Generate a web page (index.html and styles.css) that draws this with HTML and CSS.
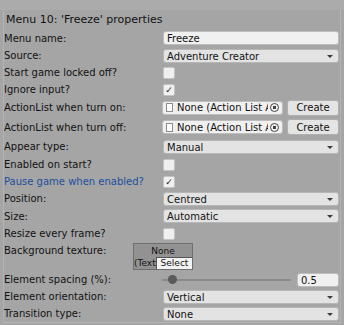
FILE: index.html
```html
<!DOCTYPE html>
<html>
  <head>
    <meta charset="utf-8" />
    <link rel="stylesheet" href="styles.css">
  </head>
  <body>
    <div class="topbar"></div>
    <div class="panel">
      <div class="title">Menu 10: 'Freeze' properties</div>

      <div class="row r18">
        <span class="label">Menu name:</span>
        <div class="field text">Freeze</div>
      </div>
      <div class="row">
        <span class="label">Source:</span>
        <div class="field dropdown">Adventure Creator<span class="arrow"></span></div>
      </div>
      <div class="row">
        <span class="label">Start game locked off?</span>
        <div class="checkbox"></div>
      </div>
      <div class="row">
        <span class="label">Ignore input?</span>
        <div class="checkbox checked">✓</div>
      </div>

      <div class="row r19">
        <span class="label">ActionList when turn on:</span>
        <div class="object-row">
          <div class="field object">
            <span class="doc-icon"></span>
            <span class="object-name">None (Action List Asset)</span>
            <span class="picker"></span>
          </div>
          <button class="btn">Create</button>
        </div>
      </div>
      <div class="row r20">
        <span class="label">ActionList when turn off:</span>
        <div class="object-row">
          <div class="field object">
            <span class="doc-icon"></span>
            <span class="object-name">None (Action List Asset)</span>
            <span class="picker"></span>
          </div>
          <button class="btn">Create</button>
        </div>
      </div>

      <div class="row r19">
        <span class="label">Appear type:</span>
        <div class="field dropdown">Manual<span class="arrow"></span></div>
      </div>
      <div class="row">
        <span class="label">Enabled on start?</span>
        <div class="checkbox"></div>
      </div>
      <div class="row">
        <span class="label blue">Pause game when enabled?</span>
        <div class="checkbox checked">✓</div>
      </div>
      <div class="row">
        <span class="label">Position:</span>
        <div class="field dropdown">Centred<span class="arrow"></span></div>
      </div>
      <div class="row r18">
        <span class="label">Size:</span>
        <div class="field dropdown">Automatic<span class="arrow"></span></div>
      </div>
      <div class="row">
        <span class="label">Resize every frame?</span>
        <div class="checkbox"></div>
      </div>

      <div class="texture-row">
        <span class="label">Background texture:</span>
        <div class="texture-box">
          <span class="texture-none">None</span>
          <span class="texture-type">(Texture)</span>
          <span class="select-btn">Select</span>
        </div>
      </div>

      <div class="row">
        <span class="label">Element spacing (%):</span>
        <div class="slider-row">
          <div class="slider">
            <span class="track"></span>
            <span class="thumb"></span>
          </div>
          <div class="field number">0.5</div>
        </div>
      </div>
      <div class="row">
        <span class="label">Element orientation:</span>
        <div class="field dropdown">Vertical<span class="arrow"></span></div>
      </div>
      <div class="row">
        <span class="label">Transition type:</span>
        <div class="field dropdown">None<span class="arrow"></span></div>
      </div>
    </div>
  </body>
</html>
```

FILE: styles.css
```css
body {
  width: 344px;
  height: 325px;
  margin: 0;
  overflow: hidden;
  background: #a5a5a5;
  font-family: "DejaVu Sans", Verdana, sans-serif;
  font-size: 10px;
  color: #121212;
}

.topbar {
  height: 10px;
  background: #ababab;
}

.panel {
  height: 312px;
  margin: 0 3px;
  padding-right: 1px;
  border-left: 1px solid #b3b3b3;
  border-right: 1px solid #b3b3b3;
  border-bottom: 1px solid #b3b3b3;
}

.title {
  height: 19px;
  line-height: 19px;
  padding-left: 2px;
  font-size: 11px;
}

.row {
  display: grid;
  grid-template-columns: 159px minmax(0, 1fr);
  align-items: center;
  height: 17px;
}

.r18 {
  height: 18px;
}

.r19 {
  height: 19px;
}

.r20 {
  height: 20px;
}

.label {
  white-space: nowrap;
}

.label.blue {
  color: #1c4f9e;
}

.field {
  position: relative;
  height: 14px;
  line-height: 13px;
  padding-left: 3px;
  border: 1px solid #bdbdbd;
  border-radius: 3px;
  background: #f0f0f0;
  box-sizing: border-box;
  white-space: nowrap;
  overflow: hidden;
}

.dropdown {
  background: #e3e3e3;
  border-color: #b6b6b6;
}

.arrow {
  position: absolute;
  right: 5px;
  top: 5px;
  border-left: 3px solid transparent;
  border-right: 3px solid transparent;
  border-top: 3px solid #3a3a3a;
}

.checkbox {
  width: 12px;
  height: 12px;
  border: 1px solid #c4c4c4;
  border-radius: 2px;
  background: #f0f0f0;
  box-sizing: border-box;
  font-size: 9px;
  line-height: 11px;
  text-align: center;
  color: #1a1a1a;
}

.object-row {
  display: flex;
  gap: 4px;
  align-items: center;
  min-width: 0;
}

.object {
  flex: 1;
  min-width: 0;
  display: flex;
  align-items: center;
  padding-left: 3px;
  margin-left: -1px;
}

.doc-icon {
  flex: none;
  width: 5px;
  height: 7px;
  border: 1px solid #8c8c8c;
  background: #ffffff;
  margin-right: 4px;
}

.object-name {
  flex: 1;
  min-width: 0;
  overflow: hidden;
  white-space: nowrap;
}

.picker {
  flex: none;
  width: 7px;
  height: 7px;
  margin: 0 3px 0 2px;
  border: 1px solid #444;
  border-radius: 50%;
  background: radial-gradient(circle, #444 0 1.5px, transparent 2px);
}

.btn {
  flex: none;
  width: 52px;
  height: 16px;
  padding: 0;
  border: 1px solid #b0b0b0;
  border-radius: 3px;
  background: #e4e4e4;
  font-family: inherit;
  font-size: 10px;
  color: #121212;
}

.texture-row {
  display: flex;
  height: 29px;
  align-items: flex-start;
}

.texture-row .label {
  width: 129px;
  padding-top: 3px;
}

.texture-box {
  position: relative;
  width: 60px;
  height: 27px;
  margin-top: 1px;
  border: 1px solid #6f6f6f;
  background: #929292;
  box-sizing: border-box;
  font-size: 9px;
  text-align: center;
  overflow: hidden;
}

.texture-none {
  display: block;
  padding-top: 1px;
  line-height: 12px;
}

.texture-type {
  display: block;
  width: 22px;
  overflow: hidden;
  white-space: nowrap;
  line-height: 12px;
  text-align: left;
}

.select-btn {
  position: absolute;
  right: 0;
  bottom: 0;
  width: 35px;
  height: 11px;
  line-height: 11px;
  border-top: 1px solid #555;
  border-left: 1px solid #555;
  background: #f2f2f2;
  text-align: center;
}

.slider-row {
  display: flex;
  align-items: center;
  gap: 6px;
  margin-left: -1px;
}

.slider {
  position: relative;
  flex: 1;
  height: 14px;
}

.track {
  position: absolute;
  left: 0;
  right: 0;
  top: 6px;
  height: 2px;
  background: #8a8a8a;
}

.thumb {
  position: absolute;
  left: 6px;
  top: 2px;
  width: 9px;
  height: 9px;
  border-radius: 50%;
  background: #5a5a5a;
}

.number {
  width: 42px;
}
```
